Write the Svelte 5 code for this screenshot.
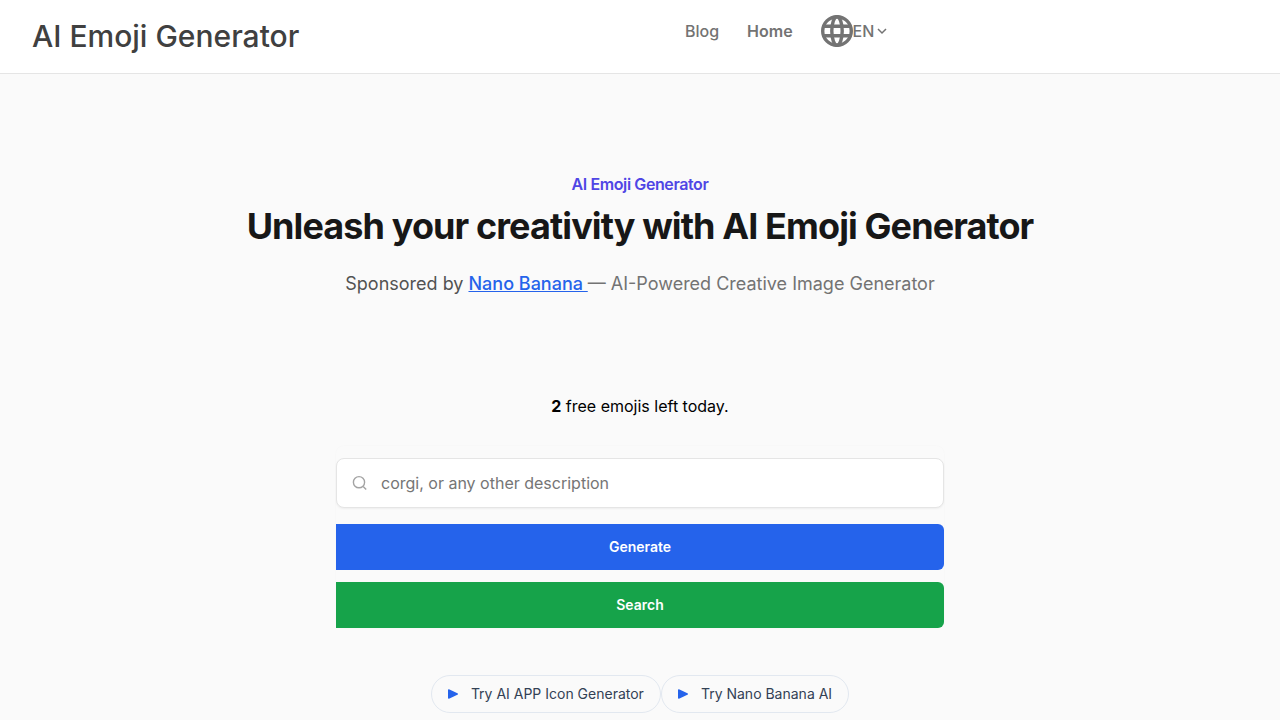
<script lang="ts">
    const navLinks = [
        { label: "Blog", href: "#blog", active: false },
        { label: "Home", href: "#home", active: true },
    ];

    const promos = [
        { label: "Try AI APP Icon Generator", href: "#app-icon" },
        { label: "Try Nano Banana AI", href: "#nano-banana-ai" },
    ];

    let prompt = $state("");

    function handleSubmit(e: SubmitEvent) {
        e.preventDefault();
    }
</script>

<header class="header">
    <a class="brand" href="#top">AI Emoji Generator</a>
    <nav class="nav">
        {#each navLinks as link}
            <a class="nav-link" class:active={link.active} href={link.href}>{link.label}</a>
        {/each}
        <button class="language" type="button">
            <svg class="globe" viewBox="0 0 32 32" aria-hidden="true">
                <circle cx="16" cy="16" r="14.3" />
                <ellipse cx="16" cy="16" rx="5.2" ry="14.3" />
                <path d="M3 11.2h26M3 20.8h26" />
            </svg>
            <span>EN</span>
            <svg class="chevron" viewBox="0 0 16 16" aria-hidden="true">
                <path d="M4 6l4 4 4-4" />
            </svg>
        </button>
    </nav>
</header>

<main class="main">
    <section class="hero">
        <p class="eyebrow">AI Emoji Generator</p>
        <h1>Unleash your creativity with AI Emoji Generator</h1>
        <p class="sponsor">
            Sponsored by <a href="#nano-banana">Nano Banana&#32;</a><span>— AI-Powered Creative Image Generator</span>
        </p>
    </section>

    <p class="quota"><b>2</b> free emojis left today.</p>

    <form class="form" onsubmit={handleSubmit}>
        <label class="field">
            <svg class="search" viewBox="0 0 16 16" aria-hidden="true">
                <circle cx="7" cy="7.2" r="5.6" />
                <path d="M11.2 11.4l3 3" />
            </svg>
            <input
                type="text"
                bind:value={prompt}
                placeholder="corgi, or any other description"
                aria-label="Emoji description"
            />
        </label>
        <button class="submit generate" type="submit">Generate</button>
        <button class="submit find" type="button">Search</button>
    </form>

    <div class="promos">
        {#each promos as promo}
            <a class="promo" href={promo.href}>
                <svg viewBox="0 0 10 10" aria-hidden="true">
                    <path d="M0 .9C0 .3.5 0 1 .2L9.4 4.2C10.2 4.6 10.2 5.4 9.4 5.8L1 9.8C.5 10 0 9.7 0 9.1z" />
                </svg>
                {promo.label}
            </a>
        {/each}
    </div>
</main>

<style>
    :global(body) {
        background: #fafafa;
        color: #000;
        font-family: Inter, "Liberation Sans", sans-serif;
        font-size: 16px;
        line-height: 24px;
    }

    :global(html) {
        scrollbar-width: none;
    }

    p,
    h1 {
        margin: 0;
    }

    a {
        text-decoration: none;
    }

    button,
    input {
        font: inherit;
        border: 0;
        padding: 0;
    }

    .header {
        display: flex;
        align-items: flex-start;
        justify-content: space-between;
        padding: 15px 32px 16px;
        background: #fff;
        border-bottom: 1px solid #e5e5e5;
    }

    /* empty third column keeps the nav in the middle of the free space */
    .header::after {
        content: "";
    }

    .brand {
        color: #404040;
        font-size: 30px;
        font-weight: 500;
        line-height: 42px;
    }

    .nav {
        display: flex;
        align-items: center;
        color: #737373;
        font-weight: 500;
    }

    .nav > * {
        margin-left: 28px;
    }

    .nav-link {
        color: inherit;
    }

    .nav-link.active {
        font-weight: 600;
    }

    .language {
        display: flex;
        align-items: center;
        background: none;
        color: inherit;
        cursor: pointer;
    }

    .globe,
    .chevron,
    .search {
        fill: none;
        stroke: currentColor;
    }

    .globe {
        width: 32px;
        height: 32px;
        stroke-width: 3.4;
    }

    .chevron {
        width: 16px;
        height: 16px;
        stroke-width: 1.5;
    }

    .main {
        display: flex;
        flex-direction: column;
        align-items: center;
        padding: 96px 32px 0;
    }

    .hero {
        text-align: center;
    }

    .eyebrow {
        color: #4f46e5;
        font-weight: 600;
        line-height: 28px;
        letter-spacing: -0.025em;
    }

    h1 {
        margin-top: 8px;
        color: #171717;
        font-size: 36px;
        font-weight: 700;
        line-height: 40px;
        letter-spacing: -0.025em;
    }

    .sponsor {
        margin-top: 24px;
        color: #525252;
        font-size: 18px;
        line-height: 28px;
    }

    .sponsor a {
        color: #2563eb;
        font-weight: 500;
        text-decoration: underline;
        white-space: pre-wrap;
    }

    .sponsor span {
        color: #737373;
    }

    .quota {
        margin-top: 96px;
    }

    .form {
        display: flex;
        flex-direction: column;
        gap: 12px;
        width: 100%;
        max-width: 608px;
        margin-top: 28px;
        padding-top: 12px;
        border-radius: 8px;
        box-shadow: 0 0 2px rgba(0, 0, 0, 0.03);
    }

    .field {
        display: flex;
        align-items: center;
        gap: 13px;
        margin-bottom: 4px;
        padding: 0 15px;
        background: #fff;
        border: 1px solid #e5e5e5;
        border-radius: 8px;
        box-shadow: 0 1px 2px rgba(0, 0, 0, 0.05);
        color: #a3a3a3;
    }

    .search {
        width: 16px;
        height: 16px;
        stroke-width: 1.4;
    }

    .field input {
        flex: 1;
        min-width: 0;
        height: 48px;
        background: none;
        color: #171717;
        outline: none;
    }

    .field input::placeholder {
        color: #757575;
    }

    .submit {
        height: 46px;
        border-radius: 0 6px 6px 0;
        color: #fff;
        font-size: 14px;
        font-weight: 600;
        cursor: pointer;
    }

    .generate {
        background: #2563eb;
    }

    .find {
        background: #16a34a;
    }

    .promos {
        display: flex;
        flex-wrap: wrap;
        justify-content: center;
        margin-top: 47px;
    }

    .promo {
        display: flex;
        align-items: center;
        gap: 13px;
        padding: 8px 16px;
        border: 1px solid #e2e8f0;
        border-radius: 20px;
        color: #334155;
        font-size: 14px;
        line-height: 20px;
    }

    .promo svg {
        width: 10px;
        height: 10px;
        fill: #2563eb;
    }
</style>
